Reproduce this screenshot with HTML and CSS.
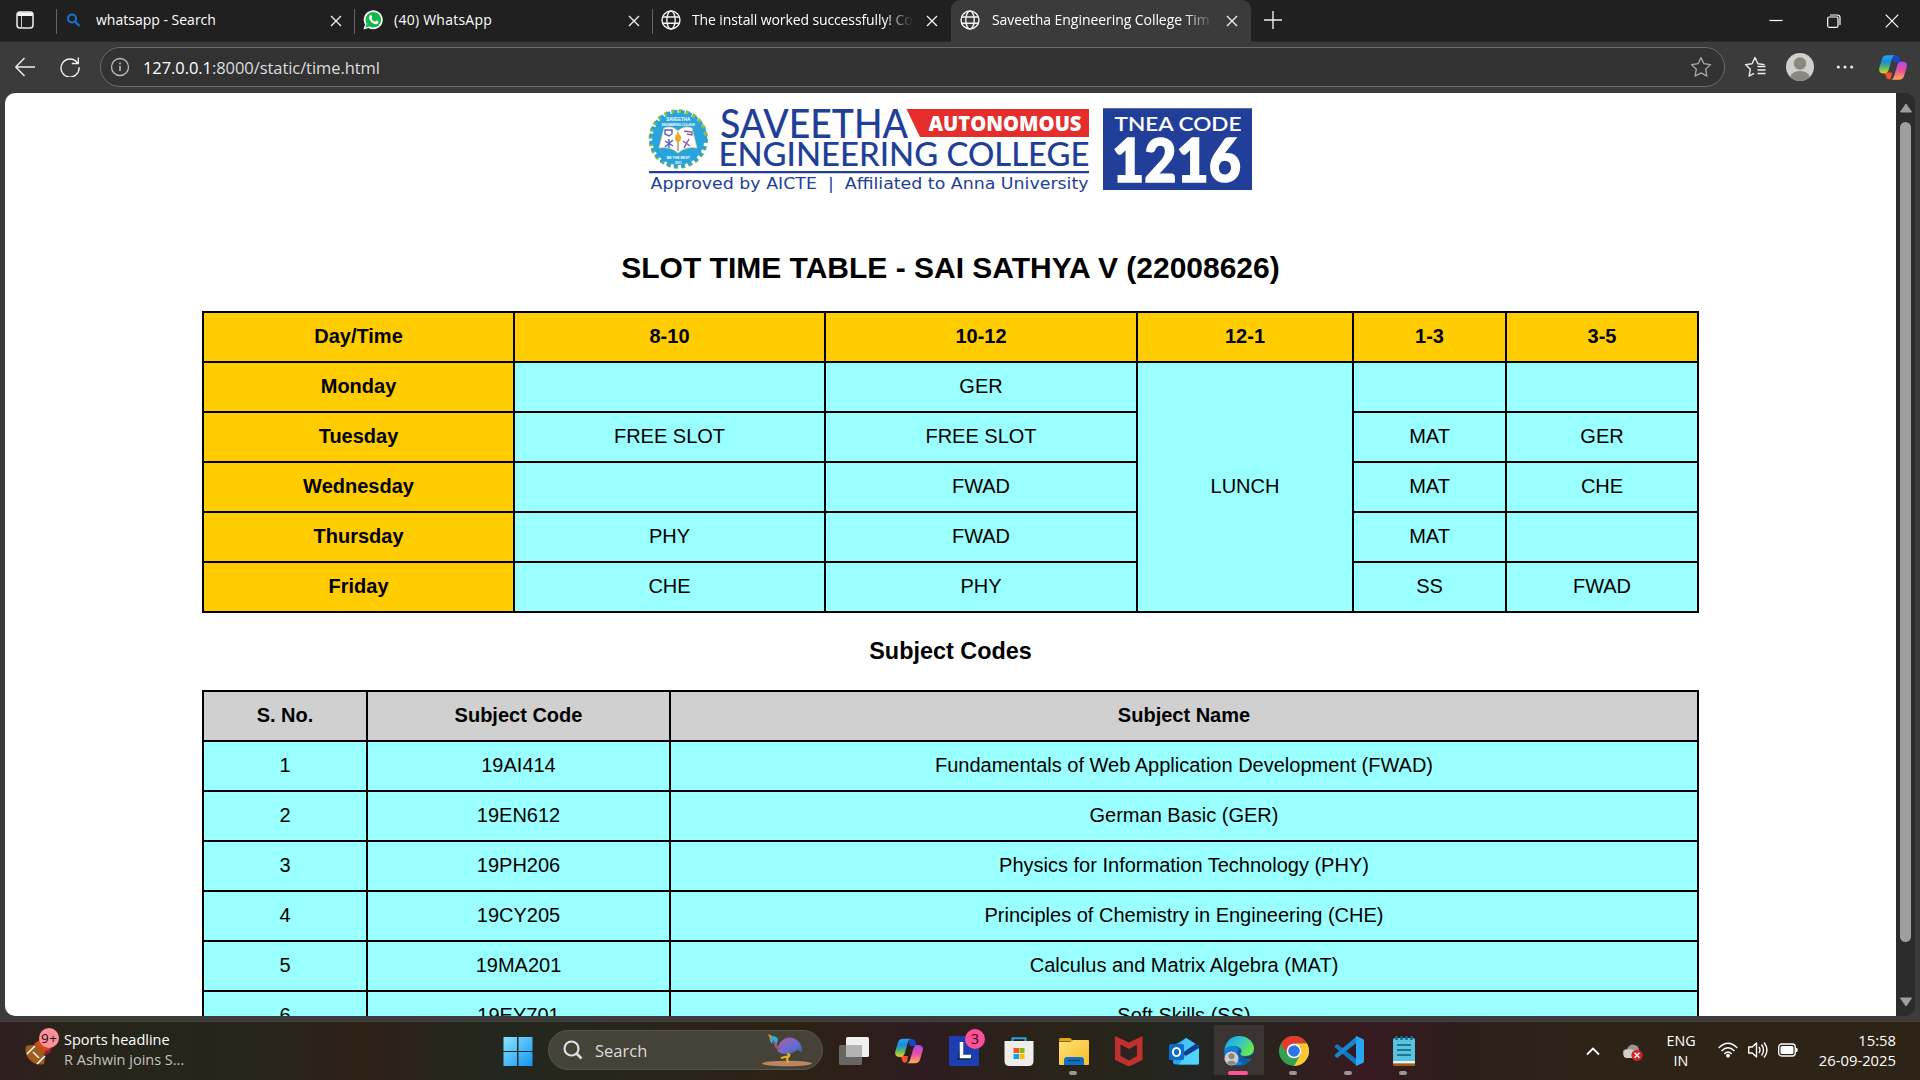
FILE: index.html
```html
<!DOCTYPE html>
<html lang="en">
<head>
<meta charset="utf-8">
<title>Saveetha Engineering College Timetable</title>
<link rel="stylesheet" href="styles.css">
</head>
<body>
<svg class="defs" width="0" height="0">
  <defs>
    <linearGradient id="cpA" x1="0" y1="0" x2="0" y2="1"><stop offset="0" stop-color="#28a5f5"/><stop offset=".35" stop-color="#1a8bdc"/><stop offset=".65" stop-color="#4fb86a"/><stop offset="1" stop-color="#f3cb1c"/></linearGradient>
    <linearGradient id="cpB" x1="0" y1="0" x2="0" y2="1"><stop offset="0" stop-color="#a94df0"/><stop offset=".5" stop-color="#ea4f98"/><stop offset="1" stop-color="#ffad55"/></linearGradient>
    <linearGradient id="win" x1="0" y1="0" x2="1" y2="1"><stop offset="0" stop-color="#8ae4fd"/><stop offset="1" stop-color="#0f95f4"/></linearGradient>
    <linearGradient id="edgeTop" x1="0" y1="0" x2="1" y2=".5"><stop offset="0" stop-color="#1f9be0"/><stop offset=".5" stop-color="#30c3d0"/><stop offset="1" stop-color="#66e84e"/></linearGradient>
    <linearGradient id="folder" x1="0" y1="0" x2="1" y2="1"><stop offset="0" stop-color="#ffe07a"/><stop offset="1" stop-color="#f9bd25"/></linearGradient>
    <linearGradient id="bird" x1="0" y1="0" x2="1" y2="1"><stop offset="0" stop-color="#b0618e"/><stop offset=".5" stop-color="#6f6bd0"/><stop offset="1" stop-color="#3f63b5"/></linearGradient>
    <symbol id="close" viewBox="0 0 12 12"><path d="M1 1l10 10M11 1L1 11" fill="none" stroke="#eee" stroke-width="1.4"/></symbol>
    <symbol id="globe" viewBox="0 0 20 20"><g fill="none" stroke="#f2f2f2" stroke-width="1.4"><circle cx="10" cy="10" r="9"/><ellipse cx="10" cy="10" rx="4.2" ry="9"/><path d="M2 7h16M2 13.2h16"/></g></symbol>
    <symbol id="copilot" viewBox="0 0 28 26">
      <path d="M13 1h4c2 0 3 1 3.500 2.600L21.500 8H15z" fill="#1746c7"/>
      <path d="M6 18h7l-1 6c-2.600 1.500-4.500.4-5-2z" fill="#f4502e"/>
      <path d="M8 .8h8c-2 .4-2.700 2-3.300 4.200L9.800 15c-.8 2.700-2 4-4.800 4-4 0-5.600-2-4.600-6L3 4.500C3.800 2 5.300.8 8 .8z" fill="url(#cpA)"/>
      <path d="M20 25.200h-8c2-.4 2.700-2 3.300-4.200l2.900-10c.8-2.700 2-4 4.800-4 4 0 5.600 2 4.600 6L25 21.500c-.8 2.500-2.300 3.700-5 3.700z" fill="url(#cpB)"/>
    </symbol>
  </defs>
</svg>

<header class="titlebar">
  <div class="lead">
    <svg width="18" height="18" viewBox="0 0 18 18"><rect x="1" y="1" width="16" height="16" rx="3" fill="none" stroke="#eee" stroke-width="1.5"/><path d="M1.500 1.500h15V5h-15z" fill="#f5f5f5"/><path d="M5.500 5v12" stroke="#ccc"/></svg>
  </div>
  <div class="tab">
    <svg class="fav" width="20" height="20" viewBox="0 0 20 20"><circle cx="7" cy="8.500" r="4" fill="none" stroke="#1875d1" stroke-width="2"/><path d="M10 11.500l4.500 4.500" stroke="#1875d1" stroke-width="2.200"/></svg>
    <span class="label l1">whatsapp - Search</span><svg class="x" width="12" height="12"><use href="#close"/></svg>
  </div>
  <div class="tab">
    <svg class="fav" width="20" height="20" viewBox="0 0 20 20"><path d="M.5 19.500L2 14.500A9.500 9.500 0 1 1 5.500 18z" fill="#fff"/><circle cx="10.300" cy="9.700" r="7.800" fill="#12b84a"/><path d="M2.500 17.500l1-3.800 3 2.900z" fill="#12b84a"/><path d="M6.700 5.500c1-1 1.700-.6 2 .2l.6 1.500c0 .5-.8 1-.8 1.300.8 1.600 1.900 2.600 3.500 3.200.5 0 .9-1.200 1.400-1.100l2 1c.4.300-.1 2.100-1.300 2.500-4 1.100-9.800-4.800-7.400-8.600z" fill="#fff"/></svg>
    <span class="label l2">(40) WhatsApp</span><svg class="x" width="12" height="12"><use href="#close"/></svg>
  </div>
  <div class="tab last">
    <svg class="fav" width="20" height="20"><use href="#globe"/></svg>
    <span class="label fade l3">The install worked successfully! Co</span><svg class="x" width="12" height="12"><use href="#close"/></svg>
  </div>
  <div class="tab active">
    <svg class="fav" width="20" height="20"><use href="#globe"/></svg>
    <span class="label fade l4">Saveetha Engineering College Tim</span><svg class="x" width="12" height="12"><use href="#close"/></svg>
  </div>
  <svg class="plus" width="18" height="18" viewBox="0 0 18 18"><path d="M9 0v18M0 9h18" stroke="#eee" stroke-width="1.400"/></svg>
  <div class="controls">
    <svg width="14" height="14" viewBox="0 0 14 14"><path d="M.5 6.500h13" stroke="#fff" stroke-width="1.200"/></svg>
    <svg width="14" height="14" viewBox="0 0 14 14"><g fill="none" stroke="#fff" stroke-width="1.200"><rect x=".7" y="3" width="10.300" height="10.300" rx="1.500"/><path d="M3 1h7.500A2.500 2.500 0 0 1 13 3.500V11"/></g></svg>
    <svg width="14" height="14" viewBox="0 0 14 14"><path d="M.7.7l12.600 12.600M13.300.7L.7 13.300" stroke="#fff" stroke-width="1.200"/></svg>
  </div>
</header>

<nav class="toolbar">
  <svg class="back" width="20" height="20" viewBox="0 0 20 20"><path d="M20 10H1M9.500 1L.8 10l8.700 9" fill="none" stroke="#eee" stroke-width="1.400"/></svg>
  <svg class="reload" width="20" height="20" viewBox="0 0 20 20"><path d="M17.500 6A9 9 0 1 0 19 10M18.300.5v6h-6.500" fill="none" stroke="#eee" stroke-width="1.400"/></svg>
  <div class="address">
    <svg width="20" height="20" viewBox="0 0 20 20"><circle cx="10" cy="10" r="8.500" fill="none" stroke="#bbb" stroke-width="1.300"/><path d="M10 9v5" stroke="#ccc" stroke-width="1.400"/><circle cx="10" cy="6.500" r=".9" fill="#ccc"/></svg>
    <span class="url"><b>127.0.0.1</b>:8000/static/time.html</span>
    <svg width="22" height="22" viewBox="0 0 22 22"><path d="M11 1.500l2.900 6.200 6.600.9-4.800 4.700 1.200 6.800-5.900-3.200-5.900 3.200 1.200-6.800L1.500 8.600l6.600-.9z" fill="none" stroke="#a8a8a8" stroke-width="1.300" stroke-linejoin="round"/></svg>
  </div>
  <svg class="favs" width="22" height="22" viewBox="0 0 22 22"><path d="M20.500 8.600l-6.600-.9L11 1.500 8.100 7.700l-6.600.9 4.800 4.700-1.200 6.800 5-2.800M13.500 10.500h8M13.500 14h8M13.500 17.500h8" fill="none" stroke="#eee" stroke-width="1.400" stroke-linejoin="round"/></svg>
  <svg class="avatar" width="28" height="28" viewBox="0 0 28 28"><clipPath id="av"><circle cx="14" cy="14" r="14"/></clipPath><g clip-path="url(#av)"><path d="M0 0h28v28H0z" fill="#d1cfcb"/><circle cx="14" cy="10.500" r="6.200" fill="#8b8783"/><ellipse cx="14" cy="25" rx="10" ry="7" fill="#8b8783"/></g></svg>
  <svg class="dots" width="18" height="6" viewBox="0 0 18 6"><g fill="#eee"><circle cx="2.300" cy="3" r="1.500"/><circle cx="9" cy="3" r="1.500"/><circle cx="15.700" cy="3" r="1.500"/></g></svg>
  <svg width="28" height="27"><use href="#copilot"/></svg>
</nav>

<div class="stage">
  <main class="page">
    <svg class="logo" width="620" height="100" viewBox="641 100 620 100">
      <circle cx="678.300" cy="139" r="27.500" fill="none" stroke="#86bd45" stroke-width="4.500" stroke-dasharray="4 3.200"/>
      <circle cx="678.300" cy="139" r="26" fill="#29a3dc"/>
      <circle cx="678.300" cy="139" r="27" fill="none" stroke="#29a3dc" stroke-width="4" stroke-dasharray="3.600 3.600"/>
      <path d="M664 128q8-3 14 3 6-6 14-3l5 20q-11-2-19 5-8-7-19-5z" fill="#fff" stroke="#e6d58d" stroke-width=".7"/>
      <path d="M665 130h7v4l-3 2-4-2zM665 141l8 5m0-6l-8 7m4-8v9" fill="none" stroke="#5862bd" stroke-width="1.400"/>
      <path d="M684 131l8 1v3l-5-1M683 141l7 5m-1-7l-5 9" fill="none" stroke="#8d54a6" stroke-width="1.400"/>
      <path d="M678 132v19" stroke="#7b7135" stroke-width="1"/><ellipse cx="678" cy="138" rx="3" ry="4" fill="#f2a91f"/>
      <g class="seal" text-anchor="middle"><text x="678.300" y="120.500" font-size="4.500">SAVEETHA</text><text x="678.300" y="125.500" font-size="2.800" textLength="33">ENGINEERING COLLEGE</text><text x="678.300" y="158.500" font-size="3.500">BE THE BEST</text><text x="678.300" y="163.500" font-size="3">2001</text></g>
      <g fill="#213f99">
        <text class="futura" x="720" y="137.500" font-size="39.500" textLength="188" lengthAdjust="spacingAndGlyphs">SAVEETHA</text>
        <text class="futura" x="718.500" y="166.300" font-size="33.500" textLength="371" lengthAdjust="spacingAndGlyphs">ENGINEERING COLLEGE</text>
        <path d="M649 171h440v2.200H649zM1103 108.300h149V190h-149z"/>
        <text class="approved" x="650.500" y="189" textLength="438" lengthAdjust="spacingAndGlyphs">Approved by AICTE &#160;|&#160; Affiliated to Anna University</text>
      </g>
      <path d="M906.500 109H1089v28H920z" fill="#e52d2c"/>
      <g fill="#fff">
        <text class="auto" x="928.500" y="130.500" font-size="20.500" textLength="153" lengthAdjust="spacingAndGlyphs">AUTONOMOUS</text>
        <text class="tnea" x="1114.500" y="131" font-size="19.500" textLength="127" lengthAdjust="spacingAndGlyphs">TNEA CODE</text>
        <text class="code" x="1112" y="181.500" font-size="60" textLength="129" lengthAdjust="spacingAndGlyphs">1216</text>
      </g>
    </svg>
    <h1>SLOT TIME TABLE - SAI SATHYA V (22008626)</h1>
    <table class="slots">
      <colgroup><col class="d"><col class="d"><col class="e"><col class="f"><col class="g"><col class="h"></colgroup>
      <tr><th>Day/Time</th><th>8-10</th><th>10-12</th><th>12-1</th><th>1-3</th><th>3-5</th></tr>
      <tr><th>Monday</th><td></td><td>GER</td><td rowspan="5">LUNCH</td><td></td><td></td></tr>
      <tr><th>Tuesday</th><td>FREE SLOT</td><td>FREE SLOT</td><td>MAT</td><td>GER</td></tr>
      <tr><th>Wednesday</th><td></td><td>FWAD</td><td>MAT</td><td>CHE</td></tr>
      <tr><th>Thursday</th><td>PHY</td><td>FWAD</td><td>MAT</td><td></td></tr>
      <tr><th>Friday</th><td>CHE</td><td>PHY</td><td>SS</td><td>FWAD</td></tr>
    </table>
    <h3>Subject Codes</h3>
    <table class="codes">
      <colgroup><col class="n"><col class="c"><col></colgroup>
      <tr><th>S. No.</th><th>Subject Code</th><th>Subject Name</th></tr>
      <tr><td>1</td><td>19AI414</td><td>Fundamentals of Web Application Development (FWAD)</td></tr>
      <tr><td>2</td><td>19EN612</td><td>German Basic (GER)</td></tr>
      <tr><td>3</td><td>19PH206</td><td>Physics for Information Technology (PHY)</td></tr>
      <tr><td>4</td><td>19CY205</td><td>Principles of Chemistry in Engineering (CHE)</td></tr>
      <tr><td>5</td><td>19MA201</td><td>Calculus and Matrix Algebra (MAT)</td></tr>
      <tr><td>6</td><td>19EY701</td><td>Soft Skills (SS)</td></tr>
    </table>
  </main>
  <div class="scrollbar">
    <svg width="14" height="10" viewBox="0 0 14 10"><path d="M7 1l5.500 8h-11z" fill="#9f9f9f" stroke="#9f9f9f" stroke-linejoin="round"/></svg>
    <div class="thumb"></div>
    <svg class="down" width="14" height="10" viewBox="0 0 14 10"><path d="M7 9l5.500-8h-11z" fill="#9f9f9f" stroke="#9f9f9f" stroke-linejoin="round"/></svg>
  </div>
</div>

<footer class="taskbar">
  <div class="news">
    <svg width="36" height="40" viewBox="0 0 36 40"><path d="M9 17l12-9 8 9-8 11z" fill="#d34913"/><path d="M20 24q7-1 8-7l-3 9-5 2z" fill="#8d1c3c"/><path d="M1 19q10-3 16 3 4 6 2 15-8 2-14-4-6-6-4-14z" fill="#a15b1c"/><path d="M2 27l8-8M12 37l8-8" stroke="#fff" stroke-width="1.600"/><path d="M8 25l6 6" stroke="#fff" stroke-width="1.400"/><circle cx="24" cy="11" r="10" fill="#ff8f9c"/><text x="24" y="16" text-anchor="middle" font-size="13.500" textLength="16">9+</text></svg>
    <div class="headlines"><span class="h-a">Sports headline</span><span class="h-b">R Ashwin joins S...</span></div>
  </div>
  <div class="apps">
    <div class="app"><svg width="30" height="30" viewBox="0 0 30 30"><path d="M.5 1.500q0-.5.500-.5h13v14H.5zM15.500 1H29q.5 0 .5.500V15h-14zM.5 16H14v14H1q-.5 0-.5-.5zM15.500 16h14v13.500q0 .5-.5.500H15.500z" fill="url(#win)"/></svg></div>
    <div class="search">
      <svg width="20" height="20" viewBox="0 0 20 20"><circle cx="8.500" cy="8.500" r="7" fill="none" stroke="#dedee4" stroke-width="2.200"/><path d="M13.500 13.500l5 5" stroke="#dedee4" stroke-width="2.600"/></svg>
      <span>Search</span>
      <svg class="bird" width="52" height="34" viewBox="0 0 52 34"><ellipse cx="26" cy="30.500" rx="25" ry="2.700" fill="#bd855d"/><path d="M16 17q2-9 9-12 8-2 13 4 3 3 3 10l-5-2q-4 4-12 4-6 0-8-4z" fill="url(#bird)"/><path d="M19 16q-5-2-5.500-8" fill="none" stroke="#a4507e" stroke-width="3"/><path d="M9 4q5-3 8 2l-1 5-4-4-1 4-2-3z" fill="#2bb1cd"/><path d="M7 1l5 2-3 4z" fill="#b38863"/><path d="M27 20l1 3-8 2M29 21l-3 5 1 4" fill="none" stroke="#e6b51e" stroke-width="2"/></svg>
    </div>
    <div class="app"><svg width="30" height="30" viewBox="0 0 30 30"><rect y="9" width="23" height="20" rx="1.500" fill="#686663"/><rect x="7" y="1" width="23" height="20" rx="1.500" fill="#efefef"/><path d="M7 9h16v12H8.500Q7 21 7 19.500z" fill="#b5b3b1"/></svg></div>
    <div class="app"><svg width="28" height="26"><use href="#copilot"/></svg></div>
    <div class="app"><svg width="30" height="30" viewBox="0 0 30 30"><path d="M0 0h30v30H0z" fill="#1c3eb0"/><path d="M9 20l3-13v15h12l-3 2H8z" fill="#092c59"/><path d="M12.500 6v14.500H22" fill="none" stroke="#fff" stroke-width="3.500"/></svg><span class="badge">3</span></div>
    <div class="app"><svg width="30" height="30" viewBox="0 0 30 30"><path d="M8.500 8V2.200h13V8" fill="none" stroke="#25a3dc" stroke-width="2"/><path d="M.5 5h29v20q0 5-5 5h-19q-5 0-5-5z" fill="#eeedec"/><path d="M9.500 12H15v5H9.500z" fill="#f35325"/><path d="M15.500 12h5v5h-5z" fill="#81bc06"/><path d="M9.500 18H15v5H9.500z" fill="#05a6f0"/><path d="M15.500 18h5v5h-5z" fill="#ffba08"/></svg></div>
    <div class="app open"><svg width="30" height="30" viewBox="0 0 30 30"><path d="M0 3.500Q0 2 1.500 2h10L14 5.500H0z" fill="#e8a60c"/><path d="M0 6h11l3-2h15q1 0 1 1v23q0 1-1 1H1q-1 0-1-1z" fill="url(#folder)"/><path d="M5 29v-5q0-3 3-3h14q3 0 3 3v5z" fill="#1071c3"/><path d="M9 24.500h12" stroke="#06417e" stroke-width="1.500"/></svg></div>
    <div class="app"><svg width="28" height="30" viewBox="0 0 28 30"><path d="M0 0l14 6.500L27.500 0v24L14 30.500 0 24z" fill="#c12f2f"/><path d="M5.500 8.500l8.500 4.500 8-4.500V20l-8 4.500L5.500 20z" fill="#2b2421"/></svg></div>
    <div class="app"><svg width="30" height="30" viewBox="0 0 30 30"><path d="M4 10L17 2l13 8v17q0 1.500-1.500 1.500H7Q4 28.500 4 26z" fill="#28a7e8"/><path d="M17 2l13 8-14 10-9-8z" fill="#45c5f5"/><path d="M13 17L27 7.500l3 3V13L18 21z" fill="#0c3e93"/><path d="M15 21l15-9v15q0 1.500-1.500 1.500H10z" fill="#50d4fa"/><rect y="8" width="15" height="16" rx="1.500" fill="#0b6fc9"/><ellipse cx="7.500" cy="16" rx="3.600" ry="4.100" fill="none" stroke="#fff" stroke-width="2"/></svg></div>
    <div class="app current"><svg width="30" height="30" viewBox="0 0 30 30"><circle cx="15" cy="15" r="14.800" fill="#0f5eaa"/><path d="M.5 14C2 4 9-.2 16 .1c9 .3 14 7 14 12.500 0 5-4 7.400-9 7.400-5-.2-5.500-1.700-3.500-4C19 10 6 7 .5 14z" fill="url(#edgeTop)"/><path d="M.3 14.500C2.500 9 13 8 15 14c-5 3-4 11 4 13-9 6-19.500-1-18.700-12.500z" fill="#1581d2"/><path d="M16 13q-3 8 6 8 4 0 8-3v4q-9 2-14-3-2-3 0-6z" fill="#37322f"/><circle cx="7.500" cy="22.500" r="7" fill="#d0cecb"/><circle cx="7.500" cy="20.300" r="3" fill="#8b8783"/><path d="M2.500 27q5-5 10 0-5 4-10 0z" fill="#8b8783"/></svg></div>
    <div class="app open"><svg width="30" height="30" viewBox="0 0 30 30"><circle cx="15" cy="15" r="15" fill="#33a152"/><path d="M2 7.500A15 15 0 0 1 28 7.500H15L8.500 18.700z" fill="#e33b2e"/><path d="M28 7.500A15 15 0 0 1 15 30l6.500-11.200L22 11l-7-3.500z" fill="#fcc934"/><circle cx="15" cy="15" r="7.300" fill="#fff"/><circle cx="15" cy="15" r="5.800" fill="#2f75e8"/></svg></div>
    <div class="app open"><svg width="30" height="30" viewBox="0 0 30 30"><path d="M1 9.500L3.200 8 23 23.500V30L.8 11.200q-.6-.8.200-1.700z" fill="#1177bf"/><path d="M1 20.500L3.200 22 23 6.500V0L.8 18.800q-.6.800.2 1.700z" fill="#1686d0"/><path d="M22 0l7 3q1 .5 1 1.500v21q0 1-1 1.500l-7 3z" fill="#2aa5ef"/></svg></div>
    <div class="app open"><svg width="22" height="30" viewBox="0 0 22 30"><rect y="2" width="22" height="28" rx="2" fill="#57c3dc"/><path d="M0 25h22v2.500H0z" fill="#f2eee7"/><path d="M0 27.500h22V28q0 2-2 2H2q-2 0-2-2z" fill="#a75b17"/><path d="M4 9h14M4 14h14M4 19h14" stroke="#0e5f84" stroke-width="1.700"/><path d="M3.500 0v4M8.500 0v4M13.500 0v4M18.500 0v4" stroke="#126b88" stroke-width="2.400"/></svg></div>
  </div>
  <div class="tray">
    <svg class="chev" width="14" height="10" viewBox="0 0 14 10"><path d="M1 8.500l6-6 6 6" fill="none" stroke="#fff" stroke-width="1.800"/></svg>
    <svg class="drive" width="22" height="20" viewBox="0 0 22 20"><path d="M5 7q3-6 8-4 4 1 4 5l-5 5H4q-4-1-3-4 1-2 4-2z" fill="#999690"/><path d="M3 8l5-1 9 3-3 6H4q-5-2-1-8z" fill="#d2cfc8"/><circle cx="15" cy="13.300" r="5.600" fill="#d81f2b"/><path d="M12.500 10.800l5 5m0-5l-5 5" stroke="#fff" stroke-width="1.500"/></svg>
    <div class="lang"><span>ENG</span><span>IN</span></div>
    <svg class="wifi" width="20" height="16" viewBox="0 0 20 16"><g fill="none" stroke="#fff" stroke-width="1.500"><path d="M.7 6q9.300-9.500 18.600 0M3.500 9q6.500-6.500 13 0M6.300 12q3.700-3.800 7.400 0"/></g><circle cx="10" cy="13.700" r="1.900" fill="#fff"/></svg>
    <svg class="vol" width="20" height="18" viewBox="0 0 20 18"><g fill="none" stroke="#fff" stroke-width="1.400"><path d="M.7 6v6h3.500L8.500 16V2L4.200 6z" stroke-linejoin="round"/><path d="M11 6q2 3 0 6M13.500 3.500q4 5.500 0 11M16 1.500q6 7.500 0 15"/></g></svg>
    <svg class="bat" width="20" height="14" viewBox="0 0 20 14"><rect x=".7" y="1" width="16.600" height="12" rx="3" fill="none" stroke="#fff" stroke-width="1.300"/><rect x="2.500" y="3" width="13" height="8" rx="1.500" fill="#fff"/><path d="M18 5h.7q1 0 1 2t-1 2H18z" fill="#fff"/></svg>
    <div class="clock"><span>15:58</span><span>26-09-2025</span></div>
  </div>
</footer>
</body>
</html>
```
FILE: styles.css
```css
* { box-sizing: border-box; }
body {
  margin: 0;
  width: 1920px;
  height: 1080px;
  overflow: hidden;
  display: flex;
  flex-direction: column;
  background: #3b3b3b;
  font-family: "Open Sans", "Noto Sans", sans-serif;
  color: #fff;
}
svg { display: block; flex: none; }
.defs { position: absolute; }

/* Browser tab strip */
.titlebar { height: 42px; flex: none; display: flex; background: #202020; box-shadow: inset 0 -1px #2b2b2b; }
.lead { width: 57px; padding: 11px 0 0 16px; }
.lead, .tab:not(.last):not(.active) {
  background: linear-gradient(#666, #666) right 0 top 9px / 1px 25px no-repeat;
}
.tab { width: 298px; flex: none; display: flex; align-items: center; padding: 0 13px 2px 8px; }
.tab.active { width: 300px; padding-right: 13px; background: #3b3b3b; border-radius: 9px 9px 0 0; }
.fav { margin-right: 11px; }
.tab.active .fav { margin: 0 12px 0 1px; }
.label { flex: 1; min-width: 0; overflow: hidden; white-space: nowrap; font-size: 14px; line-height: 24px; margin-right: 8px; }
.l3 { letter-spacing: -0.11px; }
.l4 { letter-spacing: -0.06px; }
.l2 { letter-spacing: 0.25px; }
.fade { -webkit-mask-image: linear-gradient(90deg, #000 85%, transparent 98%); mask-image: linear-gradient(90deg, #000 85%, transparent 98%); }
.x { margin-top: 1px; }
.plus { margin: 11px 0 0 13px; }
.controls { margin-left: auto; display: flex; gap: 44px; padding: 14px 21px 0 0; }

/* Navigation bar */
.toolbar { height: 51px; flex: none; display: flex; align-items: center; padding: 0 13px 1px 15px; }
.reload { margin-left: 25px; }
.address {
  width: 1625px;
  height: 40px;
  margin-left: 20px;
  padding: 0 12px 0 9px;
  display: flex;
  align-items: center;
  border: 1px solid #6b6b6b;
  border-radius: 20px;
  background: #323232;
}
.url { flex: 1; margin-left: 13px; font-size: 16.5px; color: #ddd; letter-spacing: -0.07px; }
.url b { font-weight: 400; color: #fff; }
.favs { margin-left: 19px; }
.avatar { margin-left: 20px; }
.dots { margin: 0 25px 0 22px; }

/* Web page */
.stage { height: 923px; flex: none; display: flex; margin: 0 5px; border-radius: 10px; overflow: hidden; }
.page {
  width: 1891px;
  display: flex;
  flex-direction: column;
  align-items: center;
  overflow: hidden;
  background: #fff;
  color: #000;
  font: 20px/23px "Liberation Sans", Arial, sans-serif;
}
.logo { margin-top: 7px; flex: none; }
.futura { font-family: Lato, sans-serif; font-weight: 500; }
.approved { font-family: "DejaVu Sans", sans-serif; font-size: 15.5px; }
.auto { font-family: "Open Sans", sans-serif; font-weight: 800; }
.tnea { font-family: Lato, sans-serif; font-weight: 600; }
.code { font-family: Lato, sans-serif; font-weight: 900; stroke: #fff; stroke-width: 1.6px; }
.seal { fill: #fff; font-weight: 700; }
h1 { margin: 50px 0 26px; font-size: 30px; line-height: 35px; flex: none; }
h3 { margin: 25px 0; font-size: 23.4px; line-height: 27px; flex: none; }
table { width: 1497px; flex: none; table-layout: fixed; border-collapse: collapse; }
th, td { height: 50px; padding: 0 0 2px; border: 2px solid #000; text-align: center; vertical-align: middle; }
td { background: #9ff; }
.slots th { background: #fc0; }
.codes th { background: #d0d0d0; }
.d { width: 311px; }
.e { width: 312px; }
.f { width: 216px; }
.g { width: 153px; }
.n { width: 164px; }
.c { width: 303px; }
.scrollbar { width: 19px; padding: 10px 0 9px 3px; display: flex; flex-direction: column; background: #2c2c2c; }
.thumb { width: 11px; height: 820px; margin: 9px 0 0 1px; border-radius: 6px; background: #9f9f9f; }
.down { margin-top: auto; }

/* Windows taskbar */
.taskbar {
  height: 59px;
  margin-top: 5px;
  flex: none;
  display: flex;
  border-top: 1px solid #46433c;
  background: linear-gradient(90deg, #2f1e1f, #29241a 4%, #25251a 8%, #282419 14%, #2d2116 19%, #23271f 26%, #29251a 33%, #2d2115 42%, #2e1c20 48%, #2a2318 54%, #262419 59%, #232624 62%, #29221c 66%, #371a20 71%, #2c1e1a 76%, #2d2317 82%);
}
.news { width: 490px; display: flex; padding: 5px 0 0 25px; }
.headlines { display: flex; flex-direction: column; margin: 3px 0 0 3px; font-size: 14.5px; line-height: 20px; }
.h-b { color: #c4c3be; }
.news text { fill: #111; }
.apps { display: flex; }
.app { width: 55px; display: flex; align-items: center; justify-content: center; position: relative; padding-bottom: 1px; }
.app.open::after { content: ""; position: absolute; left: 23px; top: 49px; width: 8px; height: 4px; border-radius: 2px; background: #9a9492; }
.app.current { background: linear-gradient(#3a3532, #3a3532) center 3px / 50px 50px no-repeat; }
.app.current::after { content: ""; position: absolute; left: 17px; top: 49px; width: 20px; height: 4px; border-radius: 2px; background: #ff5299; }
.badge { position: absolute; left: 29px; top: 7px; width: 20px; height: 20px; border-radius: 50%; background: #ff4f98; color: #111; font-size: 14px; line-height: 20px; text-align: center; }
.search {
  width: 275px;
  height: 40px;
  margin: 8px 3px 0 3px;
  padding: 0 9px 0 14px;
  display: flex;
  align-items: center;
  border: 1px solid #57544a;
  border-radius: 20px;
  background: #454237;
}
.search span { margin: 1px 0 0 12px; font-size: 16.5px; color: #ddd; }
.bird { margin-left: auto; }
.tray { margin-left: auto; display: flex; align-items: flex-start; padding-right: 24px; font-size: 14.8px; line-height: 20px; }
.chev { margin-top: 24px; }
.drive { margin: 20px 0 0 22px; }
.lang, .clock { display: flex; flex-direction: column; }
.lang { width: 40px; margin: 9px 17px 0 17px; align-items: center; }
.lang span { font-size: 14.3px; }
.wifi { margin-top: 20px; }
.vol { margin: 19px 10px 0; }
.bat { margin-top: 21px; }
.clock { width: 98px; margin-top: 8px; align-items: flex-end; }
```
